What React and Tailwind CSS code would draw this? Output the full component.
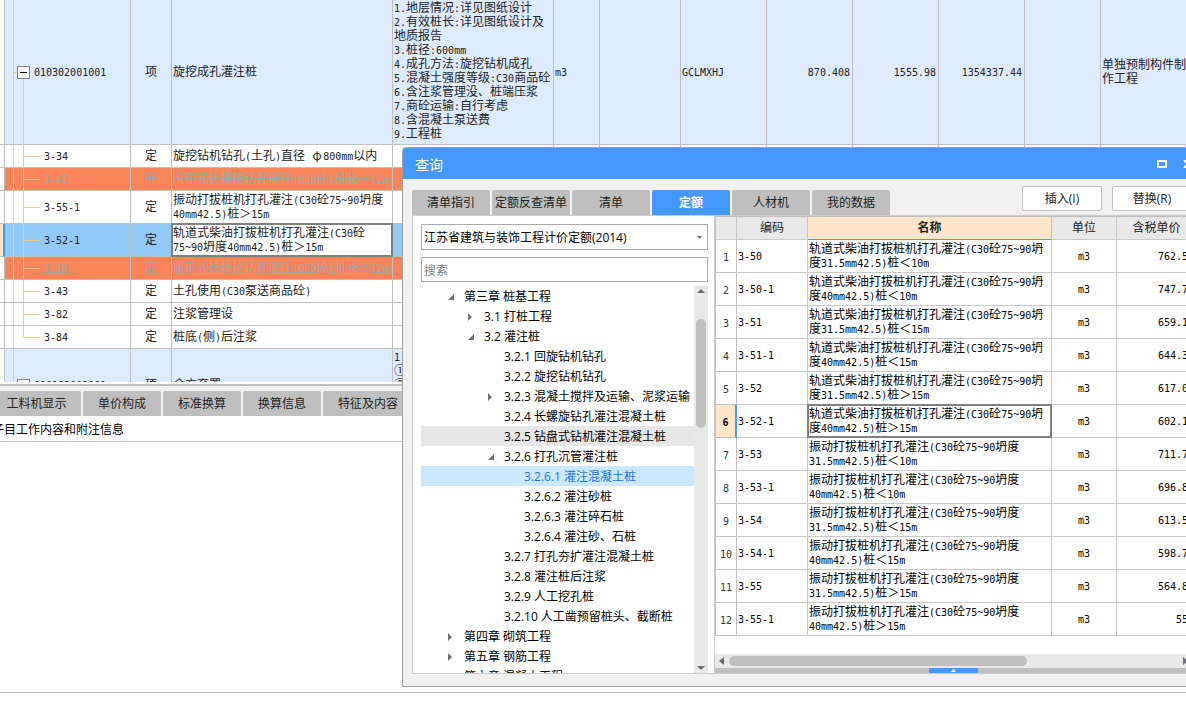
import React from "react";

const mono = "font-['DejaVu_Sans_Mono','Noto_Sans_CJK_SC',monospace]";
const cjk = "font-['Noto_Sans_CJK_SC',sans-serif] text-[12px] leading-[14px]";
const ui = "font-['Open_Sans','Noto_Sans_CJK_SC',sans-serif] text-[12px]";

// Half-width characters are set at 10px so that two of them fill one 12px ideograph.
function T({ children }) {
  return String(children)
    .split(/([\x20-\x7e]+|φ)/)
    .map((part, i) => {
      if (part === "φ") return <span key={i} className="inline-block w-3 text-center leading-none">φ</span>;
      if (i % 2) return <span key={i} className={`${mono} text-[10px] leading-none`}>{part}</span>;
      return part;
    });
}

function Lines({ rows }) {
  return rows.map((line, i) => (
    <div key={i} className="h-3.5 whitespace-pre"><T>{line}</T></div>
  ));
}

const guide = "bg-[#fcc87c]";

function ParentNode({ code, height }) {
  return (
    <div className={`flex ${height}`}>
      <span className="w-2" />
      <span className={`w-px ${guide}`} />
      <div className="grid w-4 grid-rows-[1fr_auto_1fr]">
        <span />
        <div className="flex items-center">
          <span className={`h-px w-[3px] ${guide}`} />
          <button aria-label="折叠" className="flex size-[13px] items-center justify-center border border-[#808080] bg-white">
            <span className="h-px w-[7px] bg-black" />
          </button>
        </div>
        <span className={`ml-[9px] w-px ${guide}`} />
      </div>
      <span className="ml-1 self-center pb-0.5"><T>{code}</T></span>
    </div>
  );
}

function ChildNode({ code, height, last }) {
  return (
    <div className={`flex ${height}`}>
      <span className="w-2" />
      <span className={`w-px ${guide}`} />
      <span className="w-[9px]" />
      <span className={`w-px ${guide} ${last ? "h-1/2" : ""}`} />
      <span className={`h-px w-4 self-center ${guide}`} />
      <span className="ml-1 self-center pb-0.5"><T>{code}</T></span>
    </div>
  );
}

const items = [
  { code: "3-34", name: ["旋挖钻机钻孔(土孔)直径 φ800mm以内"] },
  { code: "3-47", name: ["汽车式长螺旋钻孔灌注(C30砼)桩长＜12m"], state: "deleted" },
  { code: "3-55-1", name: ["振动打拔桩机打孔灌注(C30砼75~90坍度", "40mm42.5)桩＞15m"], tall: true },
  { code: "3-52-1", name: ["轨道式柴油打拔桩机打孔灌注(C30砼", "75~90坍度40mm42.5)桩＞15m"], tall: true, state: "current" },
  { code: "3-48", name: ["履带式长螺旋钻孔灌注(C30砼)桩长＜12m"], state: "deleted" },
  { code: "3-43", name: ["土孔使用(C30泵送商品砼)"] },
  { code: "3-82", name: ["注浆管理设"] },
  { code: "3-84", name: ["桩底(侧)后注浆"], last: true },
];

const features = [
  "1.地层情况:详见图纸设计",
  "2.有效桩长:详见图纸设计及",
  "地质报告",
  "3.桩径:600mm",
  "4.成孔方法:旋挖钻机成孔",
  "5.混凝土强度等级:C30商品砼",
  "6.含注浆管理没、桩端压浆",
  "7.商砼运输:自行考虑",
  "8.含混凝土泵送费",
  "9.工程桩",
];

const frame = "border-r border-b border-[#bfbfbf] overflow-hidden";
const treeCell = `${frame} p-0`;
const cell = `${frame} px-0 pt-0 pb-0.5`;
const rowTone = { deleted: "bg-[#fa845a] text-[#a3a3a3] line-through", current: "bg-[#93c9f7]" };

function BillTable() {
  return (
    <table className={`w-full table-fixed border-separate border-spacing-0 text-[#222] ${cjk}`}>
      <colgroup>
        <col className="w-[5px]" />
        <col className="w-[126px]" />
        <col className="w-[41px]" />
        <col className="w-[221px]" />
        <col className="w-[161px]" />
        <col className="w-[46px]" />
        <col className="w-[81px]" />
        <col className="w-[86px]" />
        <col className="w-[86px]" />
        <col className="w-[86px]" />
        <col className="w-[86px]" />
        <col className="w-[76px]" />
        <col />
      </colgroup>
      <tbody>
        <tr className="bg-[#deeafe]">
          <td className={`${cell} bg-white`} />
          <td className={treeCell}><ParentNode code="010302001001" height="h-36" /></td>
          <td className={`${cell} text-center`}>项</td>
          <td className={`${cell} pl-px`}>旋挖成孔灌注桩</td>
          <td className={`${frame} p-0 pb-1 pl-px`}><Lines rows={features} /></td>
          <td className={`${cell} pl-px`}><T>m3</T></td>
          <td className={cell} />
          <td className={`${cell} pl-px`}><T>GCLMXHJ</T></td>
          <td className={`${cell} pr-0.5 text-right`}><T>870.408</T></td>
          <td className={`${cell} pr-0.5 text-right`}><T>1555.98</T></td>
          <td className={`${cell} pr-0.5 text-right`}><T>1354337.44</T></td>
          <td className={cell} />
          <td className="overflow-hidden border-b border-[#bfbfbf] p-0 pb-0.5 pl-px"><Lines rows={["单独预制构件制", "作工程"]} /></td>
        </tr>
        {items.map((it) => (
          <tr key={it.code} className={rowTone[it.state] || "bg-white"}>
            <td className={it.state === "current" ? "border-r-2 border-b border-r-[#4499ff] border-b-[#bfbfbf] bg-[#ffe6c8] p-0" : `${cell} bg-white`} />
            <td className={treeCell}><ChildNode code={it.code} height={it.tall ? "h-8" : "h-[22px]"} last={it.last} /></td>
            <td className={`${cell} text-center`}>定</td>
            {it.state === "current" ? (
              <td className="relative border-r border-b border-[#bfbfbf] bg-white p-0 pb-0.5 pl-px">
                <Lines rows={it.name} />
                <span className="absolute -inset-px border-2 border-[#808080]" />
              </td>
            ) : (
              <td className={`${cell} pl-px`}><Lines rows={it.name} /></td>
            )}
            {[0, 1, 2, 3, 4, 5, 6, 7, 8].map((n) => <td key={n} className={cell} />)}
          </tr>
        ))}
        <tr className="bg-[#deeafe]">
          <td className={`${cell} bg-white`} />
          <td className={treeCell}><ParentNode code="010103002001" height="h-[72px]" /></td>
          <td className={`${cell} text-center`}>项</td>
          <td className={`${cell} pl-px`}>余方弃置</td>
          <td className={`${cell} pl-px align-top`}><Lines rows={["1", "①", "②"]} /></td>
          {[0, 1, 2, 3, 4, 5, 6, 7].map((n) => <td key={n} className={cell} />)}
        </tr>
      </tbody>
    </table>
  );
}

const tree = [
  [0, "第三章 桩基工程", "open"],
  [1, "3.1 打桩工程", "closed"],
  [1, "3.2 灌注桩", "open"],
  [2, "3.2.1 回旋钻机钻孔"],
  [2, "3.2.2 旋挖钻机钻孔"],
  [2, "3.2.3 混凝土搅拌及运输、泥浆运输", "closed"],
  [2, "3.2.4 长螺旋钻孔灌注混凝土桩"],
  [2, "3.2.5 钻盘式钻机灌注混凝土桩", null, "bg-[#e6e6e6]"],
  [2, "3.2.6 打孔沉管灌注桩", "open"],
  [3, "3.2.6.1 灌注混凝土桩", null, "bg-[#cce8ff] text-[#1a76e0]"],
  [3, "3.2.6.2 灌注砂桩"],
  [3, "3.2.6.3 灌注碎石桩"],
  [3, "3.2.6.4 灌注砂、石桩"],
  [2, "3.2.7 打孔夯扩灌注混凝土桩"],
  [2, "3.2.8 灌注桩后注浆"],
  [2, "3.2.9 人工挖孔桩"],
  [2, "3.2.10 人工凿预留桩头、截断桩"],
  [0, "第四章 砌筑工程", "closed"],
  [0, "第五章 钢筋工程", "closed"],
  [0, "第六章 混凝土工程", "closed"],
];

const indent = ["pl-[27px]", "pl-[47px]", "pl-[67px]", "pl-[87px]"];

function Tree() {
  return (
    <ul className="min-w-0 grow overflow-hidden">
      {tree.map(([level, label, toggle, tone]) => (
        <li key={label} className={`flex h-5 items-center gap-2 pt-0.5 whitespace-nowrap ${indent[level]} ${tone || "text-black"}`}>
          <svg viewBox="0 0 8 8" className="size-2 shrink-0 fill-[#707070]">
            {toggle === "open" && <path d="M6 1v6H0z" />}
            {toggle === "closed" && <path d="M0 0l4 4-4 4z" />}
          </svg>
          <span>{label}</span>
        </li>
      ))}
    </ul>
  );
}

const quotas = [
  ["3-50", "轨道式柴油打拔桩机打孔灌注(C30砼75~90坍", "度31.5mm42.5)桩＜10m", "762.5"],
  ["3-50-1", "轨道式柴油打拔桩机打孔灌注(C30砼75~90坍", "度40mm42.5)桩＜10m", "747.7"],
  ["3-51", "轨道式柴油打拔桩机打孔灌注(C30砼75~90坍", "度31.5mm42.5)桩＜15m", "659.1"],
  ["3-51-1", "轨道式柴油打拔桩机打孔灌注(C30砼75~90坍", "度40mm42.5)桩＜15m", "644.3"],
  ["3-52", "轨道式柴油打拔桩机打孔灌注(C30砼75~90坍", "度31.5mm42.5)桩＞15m", "617.0"],
  ["3-52-1", "轨道式柴油打拔桩机打孔灌注(C30砼75~90坍", "度40mm42.5)桩＞15m", "602.1"],
  ["3-53", "振动打拔桩机打孔灌注(C30砼75~90坍度", "31.5mm42.5)桩＜10m", "711.7"],
  ["3-53-1", "振动打拔桩机打孔灌注(C30砼75~90坍度", "40mm42.5)桩＜10m", "696.8"],
  ["3-54", "振动打拔桩机打孔灌注(C30砼75~90坍度", "31.5mm42.5)桩＜15m", "613.5"],
  ["3-54-1", "振动打拔桩机打孔灌注(C30砼75~90坍度", "40mm42.5)桩＜15m", "598.7"],
  ["3-55", "振动打拔桩机打孔灌注(C30砼75~90坍度", "31.5mm42.5)桩＞15m", "564.8"],
  ["3-55-1", "振动打拔桩机打孔灌注(C30砼75~90坍度", "40mm42.5)桩＞15m", "55"],
];

const qcell = "border-r border-b border-[#c8c8c8] px-0 pt-0 pb-0.5";

function QuotaTable() {
  return (
    <table className={`w-[482px] table-fixed border-separate border-spacing-0 border-t border-l border-[#bfbfbf] text-black ${cjk}`}>
      <colgroup>
        <col className="w-[21px]" />
        <col className="w-[71px]" />
        <col className="w-[244px]" />
        <col className="w-[65px]" />
        <col className="w-[80px]" />
      </colgroup>
      <thead>
        <tr className="h-[23px] bg-[#e8e8e8] text-[#222]">
          <th className={`${qcell} font-normal`} />
          <th className={`${qcell} font-normal`}>编码</th>
          <th className="border-r border-b border-r-[#bfbfbf] border-b-[#4499ff] bg-[#ffe6c8] p-0 pb-0.5 font-bold">名称</th>
          <th className={`${qcell} font-normal`}>单位</th>
          <th className={`${qcell} font-normal`}>含税单价</th>
        </tr>
      </thead>
      <tbody>
        {quotas.map(([code, a, b, price], i) => {
          const current = i === 5;
          return (
            <tr key={code} className="h-[33px]">
              <td className={current ? "border-r-2 border-b border-r-[#4499ff] border-b-[#bfbfbf] bg-[#ffe6c8] p-0 text-center font-bold" : "border-r border-b border-[#bfbfbf] p-0 text-center text-[#333]"}><T>{i + 1}</T></td>
              <td className={`${qcell} pl-px`}><T>{code}</T></td>
              <td className={`${qcell} relative pl-px`}>
                <Lines rows={[a, b]} />
                {current && <span className="absolute -inset-px border-2 border-[#808080]" />}
              </td>
              <td className={`${qcell} text-center`}><T>m3</T></td>
              <td className={`${qcell} pr-2 text-right`}><T>{price}</T></td>
            </tr>
          );
        })}
      </tbody>
    </table>
  );
}

const dialogTabs = ["清单指引", "定额反查清单", "清单", "定额", "人材机", "我的数据"];

function Dialog() {
  return (
    <section role="dialog" aria-label="查询" className={`absolute top-[147px] -right-4 bottom-[19px] left-[402px] flex flex-col overflow-hidden rounded-t border border-[#a0a0a0] bg-[#f1f1f1] ${ui}`}>
      <header className="flex h-[31px] shrink-0 items-center justify-between bg-[#4499ff] pr-2 pl-3 text-white">
        <h1 className="pt-0.5 text-[14px] leading-5">查询</h1>
        <div className="flex items-center gap-4">
          <button aria-label="最大化"><svg viewBox="0 0 10 8" className="h-2 w-2.5"><path d="M1 1h8v6H1z" fill="none" stroke="white" strokeWidth="2" /></svg></button>
          <button aria-label="关闭"><svg viewBox="0 0 10 8" className="h-2 w-2.5"><path d="M1 0l8 8M9 0L1 8" fill="none" stroke="white" strokeWidth="2" /></svg></button>
        </div>
      </header>
      <div className="flex h-9 shrink-0 justify-between px-[9px] text-[#222]">
        <div role="tablist" className="flex gap-0.5 self-end">
          {dialogTabs.map((t) => (
            <button key={t} role="tab" aria-selected={t === "定额"} className={`h-[25px] w-[78px] rounded-t-xs whitespace-nowrap ${t === "定额" ? "bg-[#4499ff] font-bold text-white" : "bg-[#bfbfbf]"}`}>{t}</button>
          ))}
        </div>
        <div className="mt-[7px] flex gap-2.5">
          <button className="h-[25px] w-20 rounded-xs border border-[#bfbfbf] bg-white">插入(I)</button>
          <button className="h-[25px] w-20 rounded-xs border border-[#bfbfbf] bg-white">替换(R)</button>
        </div>
      </div>
      <div className="mx-[9px] mb-3 flex min-h-0 grow border border-r-0 border-[#ccc] bg-white">
        <div className="flex w-[301px] shrink-0 flex-col pt-2 pr-1.5 pl-2">
          <div className="relative">
            <select aria-label="定额库" className="block h-[26px] w-full appearance-none border border-[#a9a9a9] bg-white pt-0.5 pl-0.5 text-black">
              <option>江苏省建筑与装饰工程计价定额(2014)</option>
            </select>
            <svg viewBox="0 0 5 3" className="pointer-events-none absolute top-3 right-1.5 h-[3px] w-[5px] fill-[#666]"><path d="M0 0h5L2.5 3z" /></svg>
          </div>
          <input aria-label="搜索" placeholder="搜索" className="mt-[7px] h-[26px] border border-[#a9a9a9] bg-white pt-0.5 pl-0.5 placeholder:text-[#808080]" />
          <div className="mt-1 flex min-h-0 grow">
            <Tree />
            <div className="flex w-3.5 shrink-0 flex-col items-center bg-[#e8e8e8]">
              <svg viewBox="0 0 8 4" className="mt-[3px] h-1 w-2 fill-[#6b6b78]"><path d="M4 0l4 4H0z" /></svg>
              <span className="mt-[26px] h-[109px] w-2.5 rounded-full bg-[#bfbfbf]" />
              <svg viewBox="0 0 8 4" className="mt-auto mb-[3px] h-1 w-2 fill-[#6b6b78]"><path d="M0 0h8L4 4z" /></svg>
            </div>
          </div>
        </div>
        <div className="flex min-w-0 grow flex-col border-l border-[#ccc]">
          <div className="min-h-0 grow overflow-hidden"><QuotaTable /></div>
          <div className="flex h-3.5 shrink-0 items-center justify-between bg-[#e8e8e8] px-1">
            <div className="flex items-center gap-[5px]">
              <svg viewBox="0 0 5 8" className="h-2 w-[5px] fill-[#6b6b78]"><path d="M5 0v8L0 4z" /></svg>
              <span className="h-2.5 w-[298px] rounded-full bg-[#bfbfbf]" />
            </div>
            <svg viewBox="0 0 5 8" className="h-2 w-[5px] fill-[#6b6b78]"><path d="M0 0v8l5-4z" /></svg>
          </div>
          <div className="flex h-[5px] shrink-0 justify-center bg-[#bfbfbf]">
            <button aria-label="展开" className="flex w-[49px] items-center justify-center bg-[#4499ff]">
              <svg viewBox="0 0 5 3" className="h-[3px] w-[5px] fill-white"><path d="M2.5 0L5 3H0z" /></svg>
            </button>
          </div>
        </div>
      </div>
    </section>
  );
}

const paneTabs = ["工料机显示", "单价构成", "标准换算", "换算信息"];

export default function App() {
  return (
    <main className="relative flex h-screen flex-col overflow-hidden bg-white">
      <div className="h-[382px] shrink-0 overflow-hidden"><BillTable /></div>
      <div role="tablist" className={`mt-0.5 flex shrink-0 gap-0.5 border-t-2 border-[#bfbfbf] bg-[#f1f1f1] pt-[5px] text-[#222] ${ui}`}>
        {paneTabs.map((t, i) => (
          <button key={t} role="tab" className={`h-[25px] shrink-0 rounded-t-xs bg-[#bfbfbf] ${i ? "w-[78px]" : "-ml-2 w-[89px]"}`}>{t}</button>
        ))}
        <button role="tab" className="h-[25px] w-[90px] shrink-0 rounded-t-xs bg-[#bfbfbf]">特征及内容</button>
      </div>
      <div className={`flex h-[26px] shrink-0 items-center border-b border-[#bfbfbf] text-black ${cjk}`}>
        <span className="-ml-2 whitespace-nowrap">子目工作内容和附注信息</span>
      </div>
      <div className="grow" />
      <footer className="h-3.5 shrink-0 border-t border-[#bfbfbf]" />
      <Dialog />
    </main>
  );
}
